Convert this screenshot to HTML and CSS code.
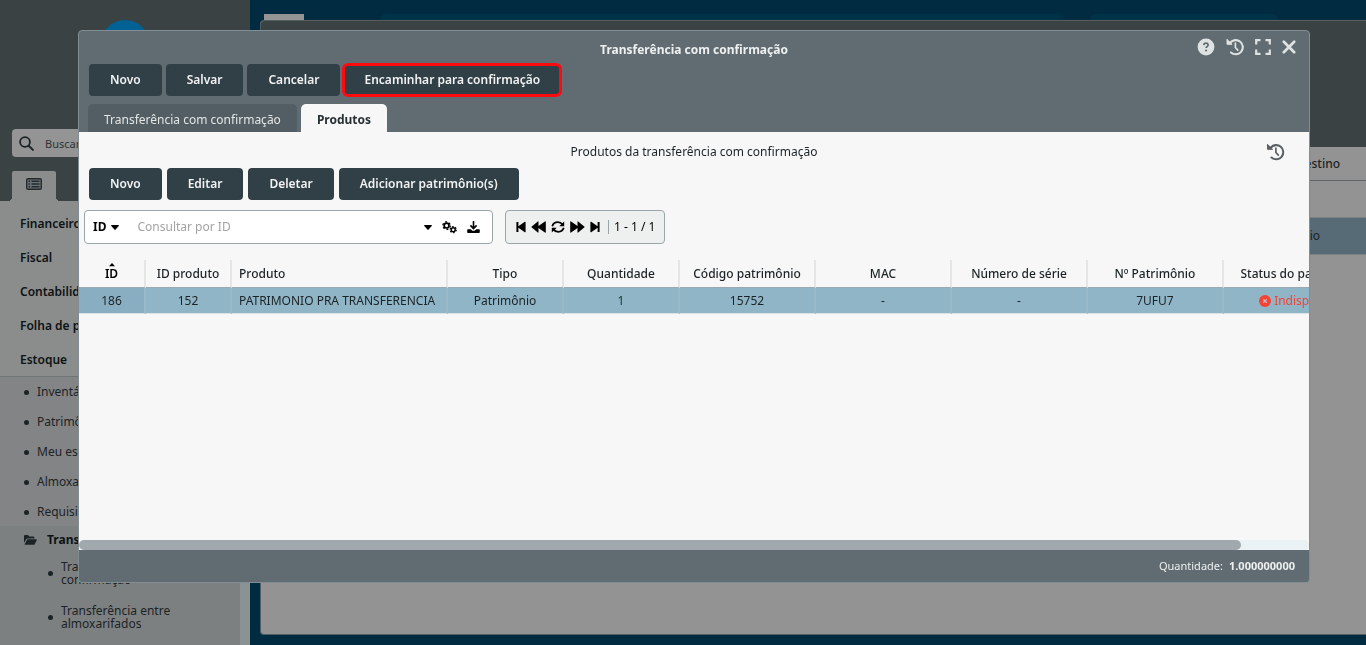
FILE: index.html
```html
<!DOCTYPE html>
<html lang="pt-BR">
<head>
<meta charset="utf-8">
<title>Transferência com confirmação</title>
<link rel="stylesheet" href="styles.css">
</head>
<body>
<svg class="sprite" aria-hidden="true">
  <symbol id="history" viewBox="0 0 18 18"><path d="M4.2 4.7A7.1 7.1 0 1 1 5 14.5" fill="none" stroke="currentColor" stroke-width="2.1" stroke-linecap="round"/><path d="M1 1.3v5h5.1L4.5 4.8 2.5 2.8z" fill="currentColor" stroke="currentColor" stroke-linejoin="round"/><path d="M9.4 5.2v4.3l2.4 2.6" fill="none" stroke="currentColor" stroke-width="1.7" stroke-linecap="round"/></symbol>
  <symbol id="caret" viewBox="0 0 8 5"><path d="M.6 0h6.8q.9.2.3 1L4.6 4.6q-.6.6-1.2 0L.3 1Q-.3.2.6 0z" fill="currentColor"/></symbol>
</svg>
<div class="app">
  <aside class="sidebar">
    <div class="sidebar-head">
      <div class="logo"></div>
      <label class="search">
        <svg width="15" height="15" viewBox="0 0 15 15"><circle cx="6" cy="6" r="4.9" fill="none" stroke="currentColor" stroke-width="1.8"/><path d="M9.7 9.7l4.2 4.2" stroke="currentColor" stroke-width="2" stroke-linecap="round"/></svg>
        <input type="text" placeholder="Buscar" aria-label="Buscar">
      </label>
      <button class="menu-tab" aria-label="Menu">
        <svg width="16" height="12" viewBox="0 0 16 12"><rect width="16" height="12" rx="2" fill="currentColor"/><rect x="1.4" y="1.4" width="13.2" height="9.2" rx=".5" fill="#6c7173"/><path d="M2.5 3.3h1.6M2.5 6h1.6M2.5 8.7h1.6M5.5 3.3h8M5.5 6h8M5.5 8.7h8" stroke="currentColor" stroke-width="1.4"/></svg>
      </button>
    </div>
    <nav class="menu">
      <ul class="menu-main">
        <li>Financeiro</li><li>Fiscal</li><li>Contabilidade</li><li>Folha de pagamento</li><li>Estoque</li>
      </ul>
      <ul class="menu-sub">
        <li>Inventário</li><li>Patrimônio</li><li>Meu estoque</li><li>Almoxarifado</li><li>Requisição</li>
      </ul>
      <div class="menu-open">
        <div class="menu-folder">
          <svg width="13" height="10" viewBox="0 0 13 10"><path d="M0 7.8V1Q0 0 1 0h3l1.3 1.4h4Q10.4 1.4 10.4 2.4v1H3.6q-.8 0-1.2.7z" fill="currentColor"/><path d="M.7 9.2l2.2-4.3q.3-.6 1-.6h8.4q.9 0 .5.8l-2.1 4.1q-.3.6-1 .6H1.2Q.4 9.8.7 9.2z" fill="currentColor"/></svg>
          Transferências
        </div>
        <ul class="menu-leaf">
          <li>Transferência com confirmação</li>
          <li>Transferência entre almoxarifados</li>
        </ul>
      </div>
    </nav>
  </aside>
  <main class="desk">
    <div class="taskbar"><span class="task-logo"></span><span class="task-wide"></span><span class="task-small"></span></div>
    <section class="window">
      <div class="window-head"></div>
      <div class="window-cols">Destino</div>
      <div class="window-filter"></div>
      <div class="window-row">próprio</div>
    </section>
  </main>
</div>

<div class="overlay">
  <section class="modal" role="dialog" aria-labelledby="title">
    <header class="modal-head">
      <div class="title-row">
        <h1 id="title">Transferência com confirmação</h1>
        <div class="win-actions">
          <button aria-label="Ajuda"><svg width="18" height="18" viewBox="0 0 18 18"><circle cx="9" cy="9" r="8.4" fill="currentColor"/><path d="M6.8 7.1q.2-2 2.2-2t2.2 1.7q0 1-1 1.6-1.1.6-1.1 1.7" fill="none" stroke="#606c71" stroke-width="1.7"/><circle cx="9.1" cy="12.5" r="1.1" fill="#606c71"/></svg></button>
          <button aria-label="Histórico"><svg width="18" height="18"><use href="#history"/></svg></button>
          <button aria-label="Tela cheia"><svg width="16" height="16" viewBox="0 0 16 16"><path d="M1.2 5.5V1.2h4.3M10.5 1.2h4.3v4.3M14.8 10.5v4.3h-4.3M5.5 14.8H1.2v-4.3" fill="none" stroke="currentColor" stroke-width="2.2"/></svg></button>
          <button aria-label="Fechar"><svg width="14" height="14" viewBox="0 0 14 14"><path d="M1.8 1.8l10.4 10.4M12.2 1.8L1.8 12.2" stroke="currentColor" stroke-width="2.7" stroke-linecap="round"/></svg></button>
        </div>
      </div>
      <div class="buttons tight">
        <button class="btn">Novo</button><button class="btn">Salvar</button><button class="btn">Cancelar</button><button class="btn marked">Encaminhar para confirmação</button>
      </div>
      <div class="tabs" role="tablist">
        <button class="tab" role="tab">Transferência com confirmação</button>
        <button class="tab active" role="tab" aria-selected="true">Produtos</button>
      </div>
    </header>
    <div class="modal-body">
      <div class="sub-title">
        <h2>Produtos da transferência com confirmação</h2>
        <button class="sub-history" aria-label="Histórico"><svg width="19" height="18" viewBox="0 0 18 18"><use href="#history"/></svg></button>
      </div>
      <div class="buttons">
        <button class="btn">Novo</button><button class="btn">Editar</button><button class="btn">Deletar</button><button class="btn">Adicionar patrimônio(s)</button>
      </div>
      <div class="tools">
        <div class="filter">
          <button class="field-pick">ID <svg width="8" height="5"><use href="#caret"/></svg></button>
          <input type="text" placeholder="Consultar por ID" aria-label="Consultar por ID">
          <button class="f-caret" aria-label="Opções"><svg width="8" height="5"><use href="#caret"/></svg></button>
          <button aria-label="Configurações"><svg width="15" height="13" viewBox="0 0 15 13"><g fill="none" stroke="currentColor"><circle cx="4.6" cy="4.6" r="2.4" stroke-width="1.7"/><circle cx="4.6" cy="4.6" r="3.7" stroke-width="1.3" stroke-dasharray="2 1.87"/><circle cx="11.2" cy="8.7" r="2" stroke-width="1.5"/><circle cx="11.2" cy="8.7" r="3.1" stroke-width="1.1" stroke-dasharray="1.7 1.55"/></g></svg></button>
          <button aria-label="Baixar"><svg width="13" height="12" viewBox="0 0 13 12"><path d="M6.5 0v7M3.4 4.4l3.1 3.1 3.1-3.1" fill="none" stroke="currentColor" stroke-width="1.6"/><path d="M1 8.2h2.8l1.6 1.5h2.2l1.6-1.5H12q.8 0 .8.8v2q0 .9-.8.9H1q-.8 0-.8-.9V9q0-.8.8-.8z" fill="currentColor"/></svg></button>
        </div>
        <div class="pager">
          <button aria-label="Primeira"><svg width="10" height="12" viewBox="0 0 10 12"><path d="M.4 1h2v4.3L8.8.8q.8-.4.8.5v9.4q0 .9-.8.5L2.4 6.7V11h-2z" fill="currentColor"/></svg></button>
          <button aria-label="Anterior"><svg width="15" height="12" viewBox="0 0 15 12"><path d="M.2 6L6.8.5q.7-.4.7.4V5L13.9.5q.9-.4.9.4v10.2q0 .8-.9.4L7.5 7v4.1q0 .8-.7.4z" fill="currentColor"/></svg></button>
          <button aria-label="Atualizar"><svg width="14" height="12" viewBox="0 0 14 12"><path d="M1.3 5.2Q2.5 1.2 6.8 1.2q3 0 4.8 2.4M12.7 6.8Q11.5 10.8 7.2 10.8q-3 0-4.8-2.4" fill="none" stroke="currentColor" stroke-width="1.8"/><path d="M13.2.4v4.9H8.3zM.8 11.6V6.7h4.9z" fill="currentColor"/></svg></button>
          <button aria-label="Próxima"><svg width="15" height="12" viewBox="0 0 15 12"><path transform="rotate(180 7.5 6)" d="M.2 6L6.8.5q.7-.4.7.4V5L13.9.5q.9-.4.9.4v10.2q0 .8-.9.4L7.5 7v4.1q0 .8-.7.4z" fill="currentColor"/></svg></button>
          <button aria-label="Última"><svg width="10" height="12" viewBox="0 0 10 12"><path transform="rotate(180 5 6)" d="M.4 1h2v4.3L8.8.8q.8-.4.8.5v9.4q0 .9-.8.5L2.4 6.7V11h-2z" fill="currentColor"/></svg></button>
          <span class="range">1 - 1 / 1</span>
        </div>
      </div>
      <div class="grid">
        <table>
          <colgroup><col class="c-id"><col class="c-idp"><col class="c-prod"><col class="c-s"><col class="c-s"><col class="c-m"><col class="c-m"><col class="c-m"><col class="c-m"><col class="c-last"></colgroup>
          <thead><tr><th><span class="sorted"><svg width="6" height="4" viewBox="0 0 6 4"><path d="M0 3.2L3 0l3 3.2z" fill="currentColor"/></svg>ID</span></th><th>ID produto</th><th class="left">Produto</th><th>Tipo</th><th>Quantidade</th><th>Código patrimônio</th><th>MAC</th><th>Número de série</th><th>Nº Patrimônio</th><th>Status do patrimônio</th></tr></thead>
          <tbody><tr><td>186</td><td>152</td><td class="left">PATRIMONIO PRA TRANSFERENCIA</td><td>Patrimônio</td><td class="qty">1</td><td>15752</td><td>-</td><td>-</td><td>7UFU7</td><td class="bad"><svg width="12" height="12" viewBox="0 0 12 12"><circle cx="6" cy="6" r="6" fill="currentColor"/><path d="M4.2 4.2l3.6 3.6M7.8 4.2L4.2 7.8" stroke="#c5b8be" stroke-width="1.3"/></svg> Indisponível</td></tr></tbody>
        </table>
      </div>
      <div class="track"><div class="thumb"></div></div>
    </div>
    <footer class="modal-foot"><span>Quantidade:</span><strong>1.000000000</strong></footer>
  </section>
</div>
</body>
</html>
```

FILE: styles.css
```css
* { box-sizing: border-box; }
html, body { height: 100%; }
body {
  margin: 0;
  overflow: hidden;
  font: 12px/16px "Noto Sans", sans-serif;
  color: #1c2326;
  background: #002b40;
}
button, input { font: inherit; color: inherit; }
button { border: 0; padding: 0; background: none; }
input { border: 0; outline: 0; background: none; min-width: 0; }
ul { list-style: none; margin: 0; padding: 0; }
h1, h2 { margin: 0; font-size: 12px; }
svg { display: block; flex: none; }
.sprite { position: absolute; width: 0; height: 0; }

.app { display: flex; height: 100%; overflow: hidden; }

/* Sidebar */
.sidebar {
  flex: none;
  width: 250px;
  border-right: 10px solid #8b9294;
  background: #8a8d8c;
}
.sidebar-head {
  display: flex;
  flex-direction: column;
  margin-right: -10px;
  padding: 20px 12px 0;
  background: #3a4244;
}
.logo {
  align-self: center;
  width: 48px;
  height: 48px;
  margin-bottom: 61px;
  border-radius: 50%;
  background: #006294;
}
.search {
  display: flex;
  align-items: center;
  gap: 11px;
  height: 28px;
  margin-bottom: 14px;
  padding: 0 7px;
  border-radius: 4px;
  background: #949494;
}
.search input { padding: 2px 0 0; font-size: 11px; }
.search input::placeholder { color: #2c3335; opacity: 1; }
.menu-tab {
  position: relative;
  display: flex;
  align-items: center;
  justify-content: center;
  width: 44px;
  height: 30px;
  padding-bottom: 4px;
  border-radius: 2px 2px 0 0;
  background: #8a8d8c;
  color: #242c30;
}
/* flared feet joining the tab to the menu */
.menu-tab::before, .menu-tab::after {
  content: "";
  position: absolute;
  bottom: 0;
  width: 4px;
  height: 4px;
}
.menu-tab::before { right: 100%; background: radial-gradient(circle at 0 0, #3a4244 4px, #8a8d8c 4px); }
.menu-tab::after { left: 100%; background: radial-gradient(circle at 100% 0, #3a4244 4px, #8a8d8c 4px); }
.menu-main { padding: 5px 0 0 20px; border-bottom: 1px solid #6f7577; font-weight: 600; color: #0d1214; }
.menu-main li { height: 34px; line-height: 35px; }
.menu-sub { background: #828485; }
.menu-sub li { display: flex; align-items: center; gap: 8px; height: 30px; padding-left: 24px; }
.menu-sub li::before, .menu-leaf li::before {
  content: "";
  flex: none;
  width: 5px;
  height: 5px;
  border-radius: 50%;
  background: #1c2326;
}
.menu-open { min-height: 120px; margin-top: -1px; background: #7c8080; }
.menu-folder { display: flex; align-items: center; gap: 10px; height: 25px; padding: 3px 0 0 24px; font-weight: 700; color: #0d1214; }
.menu-folder svg { color: #1c2326; }
.menu-leaf li { display: flex; align-items: center; gap: 8px; height: 44px; padding: 0 50px 0 48px; line-height: 13px; }

/* Background window */
.desk { flex: 1; min-width: 0; display: flex; flex-direction: column; padding: 0 0 10px 10px; }
.taskbar { display: flex; align-items: flex-end; height: 20px; padding-left: 4px; }
.task-logo { flex: none; width: 40px; height: 6px; margin-right: 76px; background: #949494; }
.task-wide { flex: 0 1 684px; height: 6px; border-radius: 8px 8px 0 0; background: #003248; }
.task-small { flex: 0 1 188px; height: 6px; margin-left: 26px; border-radius: 8px 8px 0 0; background: #003248; }
.window {
  flex: 1;
  overflow: hidden;
  border: 1px solid #545d60;
  border-right: 0;
  border-radius: 4px 0 0 4px;
  background: #939393;
  text-align: right;
}
.window-head { height: 126px; background: #3a4244; }
.window-cols { height: 34px; padding-right: 26px; border-bottom: 1px solid #5e666a; line-height: 33px; font-weight: 500; }
.window-filter { height: 36px; }
.window-row { height: 38px; padding-right: 46px; border: solid #7a7f81; border-width: 1px 0; background: #576b76; line-height: 36px; }

/* Modal */
.overlay { position: fixed; inset: 0; padding: 30px 56px 62px 78px; }
.modal {
  display: flex;
  flex-direction: column;
  height: 100%;
  overflow: hidden;
  border: 1px solid #818e94;
  border-radius: 4px;
  background: #606c71;
  color: #eef0f0;
}
.modal-head { flex: none; }
.title-row { position: relative; height: 33px; }
.title-row h1 { line-height: 37px; text-align: center; font-weight: 700; }
.win-actions {
  position: absolute;
  top: 7px;
  right: 13px;
  display: flex;
  align-items: center;
  gap: 11px;
  height: 18px;
  color: #dfe2e2;
}
.buttons { display: flex; gap: 5px; padding: 0 10px; }
.buttons.tight { gap: 4px; }
.btn {
  height: 32px;
  padding: 0 21px;
  border-radius: 4px;
  background: #314047;
  color: #f2f2f2;
  font-weight: 600;
}
.marked { height: 34px; margin: -1px 0 -1px -2px; border: 3px solid #ff0a0f; border-radius: 6px; padding: 0 19px; }
.tabs { display: flex; gap: 4px; padding: 8px 9px 0; }
.tab { height: 28px; padding: 3px 16px 0; border-radius: 5px 5px 0 0; background: #525e63; color: #e3e5e5; }
.tab.active { background: #f7f7f7; color: #263035; font-weight: 700; }
.modal-body { flex: 1; min-height: 0; display: flex; flex-direction: column; background: #f7f7f7; color: #1c2326; }
.sub-title { position: relative; flex: none; height: 36px; }
.sub-title h2 { line-height: 39px; text-align: center; font-weight: 400; }
.sub-history { position: absolute; top: 11px; right: 24px; color: #5b6064; }
.tools { display: flex; gap: 12px; padding: 10px 5px 0; }
.filter, .pager { display: flex; align-items: center; height: 34px; border: 1px solid #9aa5aa; border-radius: 4px; color: #000; }
.filter { width: 409px; padding: 0 12px 0 8px; gap: 10px; background: #fff; }
.filter input { flex: 1; margin-left: 8px; padding: 0; }
.filter input::placeholder { color: #a3a3a3; opacity: 1; }
.field-pick { display: flex; align-items: center; gap: 5px; font-weight: 700; }
.pager { padding: 0 9px 0 10px; gap: 5px; background: #eef0f0; }
.range { margin-left: 3px; padding-left: 5px; border-left: 1px solid #9aa5aa; line-height: 14px; }
.grid { flex: 1; min-height: 0; overflow: hidden; padding-top: 16px; }
table { width: 1301px; table-layout: fixed; border-collapse: separate; border-spacing: 0; }
.c-id { width: 67px; }
.c-idp { width: 86px; }
.c-prod { width: 216px; }
.c-s { width: 116px; }
.c-m { width: 136px; }
.c-last { width: 156px; }
th, td { padding: 0 7px; text-align: center; white-space: nowrap; border-right: 2px solid #e4e6e6; }
th { height: 28px; border-bottom: 1px solid #9aa9b0; font-weight: 500; }
td { height: 26px; border-right-color: #9bb8c5; border-bottom: 1px solid #dde3e5; background: #8fb5c7; }
td:first-child { background: #89aec2; }
.left { text-align: left; }
.sorted { position: relative; font-weight: 600; color: #000; }
.sorted svg { position: absolute; left: 4px; top: -2px; }
.qty { color: #17402a; }
.bad { color: #f44336; }
.bad svg { display: inline-block; vertical-align: -2px; }
.track { flex: none; height: 10px; border-radius: 5px; background: #eaf2f5; }
.thumb { width: 94.5%; height: 10px; border-radius: 5px; background: #a1a9ae; }
.modal-foot { flex: none; display: flex; align-items: center; justify-content: flex-end; gap: 6px; height: 32px; padding-right: 14px; font-size: 11px; }
```
